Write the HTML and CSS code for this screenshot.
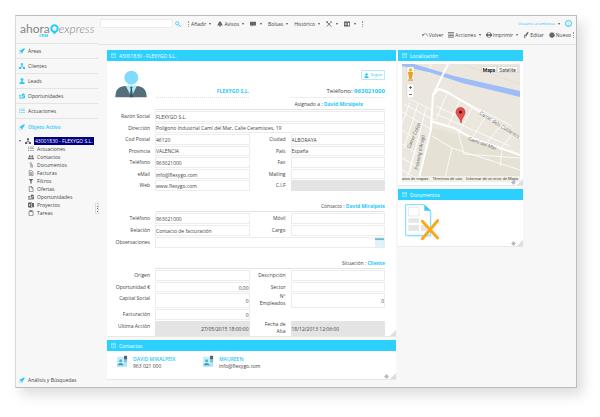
FILE: index.html
```html
<!DOCTYPE html>
<html lang="es">
<head>
<meta charset="utf-8">
<title>ahora express CRM</title>
<link rel="stylesheet" href="styles.css">
</head>
<body>
<svg width="0" height="0" class="defs" aria-hidden="true">
  <symbol id="i-rocket" viewBox="0 0 12 12"><path d="M11.5.5C8 1 6 2.500 4.500 4.500L2 4.700.3 7l2.500.2 2.200 2 .3 2.500 2-1.600.3-2.800C9.800 6 11 4 11.500.500zM.5 11.500l1-3 2 2z"/></symbol>
  <symbol id="i-org" viewBox="0 0 12 12"><path d="M4 .5h4v4H6.700v1.500L10 8h2v4H7.500V8H8L6 7 4 8h.5v4H0V8h2l3.300-2V4.500H4z"/></symbol>
  <symbol id="i-user" viewBox="0 0 12 12"><circle cx="6" cy="3.200" r="2.900"/><path d="M4.500 5.500h3V8L11 9.200V12H1V9.200L4.500 8z"/></symbol>
  <symbol id="i-users" viewBox="0 0 14 12"><circle cx="4" cy="4" r="2.300"/><circle cx="10" cy="4" r="2.300"/><path d="M0 11V8.500l3-1.300h2l1.500.8v3zM7.500 11V8L9 7.200h2l3 1.300V11z"/></symbol>
  <symbol id="i-money" viewBox="0 0 14 12"><path d="M0 4h5v2H0zm0 3h5v2H0zm0 3h8v2H0zM8 0h3v1.500h2.500v2H9v1.500h5V11h-3v1H9v-1H6.500V9h5V7H6.500V1.500H8z"/></symbol>
  <symbol id="i-list" viewBox="0 0 14 12"><path d="M0 1h2v1.500H0zm4 0h10v1.200H4zM0 5h2v1.500H0zm4 0h10v1.200H4zM0 9h2v1.500H0zm4 0h10v1.200H4z"/></symbol>
  <symbol id="i-clip" viewBox="0 0 12 12"><path d="M4 4V2.500a1.500 1.500 0 013 0V8a1 1 0 01-2 0V4M5 10.500a2.500 2.500 0 004 0V5" fill="none" stroke="currentColor"/></symbol>
  <symbol id="i-file" viewBox="0 0 12 12"><path d="M2.500.7H7L10 4v7.300H2.500zM7 .7V4h3" fill="none" stroke="currentColor" stroke-width="1.300"/></symbol>
  <symbol id="i-bill" viewBox="0 0 12 12"><path d="M2.500.7H7L10 4v7.300H2.500zM4.500 5h3v4h-3z" fill="none" stroke="currentColor" stroke-width="1.200"/></symbol>
  <symbol id="i-filter" viewBox="0 0 12 12"><path d="M1.500 2h9L7.300 6v5H4.700V6z"/></symbol>
  <symbol id="i-book" viewBox="0 0 12 12"><path d="M0 1.500L7 0v12l-7-1.500zM8 2h4v8.500H8zM2 4v4l3-2z" fill-rule="evenodd"/></symbol>
  <symbol id="i-task" viewBox="0 0 12 12"><path d="M2 2h8v9.300H2zM4 .8h4V3H4z" fill="none" stroke="currentColor" stroke-width="1.300"/></symbol>
  <symbol id="i-bell" viewBox="0 0 12 12"><path d="M6 0l1 1.500C9.500 2.500 9 6 11.500 9H.5C3 6 2.500 2.500 5 1.500zM4 9.500h4L6 12z"/></symbol>
  <symbol id="i-chat" viewBox="0 0 12 12"><path d="M0 1.500h12V9H6l-2.500 2.500V9H0z"/></symbol>
  <symbol id="i-tools" viewBox="0 0 12 12"><path d="M1.500 11L9 3.500M2 2l8.500 9" fill="none" stroke="currentColor" stroke-width="1.800"/><path d="M8 1l3 3 1-1.500L9.500 0zM0 2l2-2 2.500 2L2 4.500z"/></symbol>
  <symbol id="i-panel" viewBox="0 0 12 12"><path d="M0 1h12v10H0zm1.500 3v1.200h5V4zm0 2.500v1.200h5V6.500zM8 4v5h2.500V4z" fill-rule="evenodd"/></symbol>
  <symbol id="i-undo" viewBox="0 0 14 12"><path d="M0 4l5.500 1L1.500 9z"/><path d="M2 7C4 2 12 1 13 9" fill="none" stroke="currentColor" stroke-width="1.500"/></symbol>
  <symbol id="i-grid" viewBox="0 0 12 12"><path d="M0 0h12v2H0zm0 3h12v2H0zm0 3h12v2H0zm0 3h12v2.500H0z" opacity=".75"/></symbol>
  <symbol id="i-print" viewBox="0 0 14 12"><path d="M3 0h8v3h3v6h-3l-1 3H4L3 9H0V3h3zm1.500 1.200V4h5V1.200zM5 8v2.500h4V8z" fill-rule="evenodd"/></symbol>
  <symbol id="i-edit" viewBox="0 0 12 12"><path d="M9 0l2.500 1L7 8l-3 1 1-4zM2 6l2-1-1 5 3 .5-4 1.500z"/></symbol>
  <symbol id="i-new" viewBox="0 0 12 12"><path d="M6 0l1.200 1.600L9 .8l.5 2 2 .5-.8 1.800L12 6.500l-1.500 1.300.3 2-2 .2L8 12l-2-1-2 1-.8-2-2-.2.3-2L0 6.500l1.300-1.400L.5 3.300l2-.5.5-2 1.800.8z"/></symbol>
  <symbol id="i-search" viewBox="0 0 12 12"><circle cx="4.500" cy="4.500" r="3.300" fill="none" stroke="currentColor" stroke-width="1.500"/><path d="M7 7l4.500 4.500" stroke="currentColor" stroke-width="2"/></symbol>
  <symbol id="i-min" viewBox="0 0 12 12"><path d="M1 1h10v10H1zM1 3.500h10M3.500 7h5" fill="none" stroke="currentColor"/></symbol>
  <symbol id="i-gear" viewBox="0 0 12 12"><circle cx="6" cy="6" r="4"/><path d="M6 0v12M0 6h12M2 2l8 8M10 2l-8 8" stroke="currentColor" stroke-width="1.600"/></symbol>
  <symbol id="i-contact" viewBox="0 0 36 36"><path d="M0 4h22v32H0z" fill="#c5eefb"/><path d="M0 31h33v5H0z" fill="#8fdcf5"/><path d="M22 2h11v34H22z" fill="#aee6f7"/><path d="M23 1h10v12H23z" fill="#4d6672"/><path d="M23 14h10v8H23z" fill="#7cc3d9"/><circle cx="12" cy="17" r="5" fill="#53b4d4"/><path d="M3 31c0-8 18-8 18 0z" fill="#418fae"/></symbol>
</svg>

<div class="window">
  <aside class="sidebar">
    <div class="logo">
      <div class="name"><span class="ahora">ahora</span><svg class="ring" viewBox="0 0 18 22"><circle cx="9" cy="9" r="6.500" fill="none" stroke="#27cdf9" stroke-width="4"/><path d="M5 16h8l-4 5z" fill="#27cdf9"/></svg><span class="express">express</span></div>
      <small>CRM</small>
    </div>
    <nav class="areas">
      <a href="#"><svg><use href="#i-rocket"/></svg>Áreas</a>
      <a href="#"><svg><use href="#i-org"/></svg>Clientes</a>
      <a href="#"><svg><use href="#i-user"/></svg>Leads</a>
      <a href="#"><svg><use href="#i-money"/></svg>Oportunidades</a>
      <a href="#"><svg><use href="#i-list"/></svg>Actuaciones</a>
      <a href="#" class="active"><svg><use href="#i-rocket"/></svg>Objeto Activo</a>
    </nav>
    <div class="tree">
      <a href="#" class="root"><i class="caret"></i><svg><use href="#i-org"/></svg><span>43001830 - FLEXYGO S.L.</span></a>
      <a href="#"><svg><use href="#i-list"/></svg>Actuaciones</a>
      <a href="#"><svg><use href="#i-users"/></svg>Contactos</a>
      <a href="#"><svg><use href="#i-clip"/></svg>Documentos</a>
      <a href="#"><svg><use href="#i-bill"/></svg>Facturas</a>
      <a href="#"><svg><use href="#i-filter"/></svg>Filtros</a>
      <a href="#"><svg><use href="#i-file"/></svg>Ofertas</a>
      <a href="#"><svg><use href="#i-money"/></svg>Oportunidades</a>
      <a href="#"><svg><use href="#i-book"/></svg>Proyectos</a>
      <a href="#"><svg><use href="#i-task"/></svg>Tareas</a>
    </div>
    <button class="splitter" aria-label="Contraer menú"><i></i><i></i><i></i></button>
    <a href="#" class="bottom"><svg><use href="#i-rocket"/></svg>Análisis y Búsquedas</a>
  </aside>

  <div class="content">
    <header class="top">
      <div class="bar">
        <input class="search" type="search" aria-label="Buscar">
        <button class="go" aria-label="Buscar"><svg><use href="#i-search"/></svg></button>
        <div class="menu">
          <span class="dots"></span>
          <button>Añadir<i class="caret"></i></button>
          <button><svg><use href="#i-bell"/></svg>Avisos<i class="caret"></i></button>
          <button aria-label="Mensajes"><svg><use href="#i-chat"/></svg><i class="caret"></i></button>
          <button>Bolsas<i class="caret"></i></button>
          <button>Histórico<i class="caret"></i></button>
          <button aria-label="Herramientas"><svg><use href="#i-tools"/></svg><i class="caret"></i></button>
          <button aria-label="Paneles"><svg><use href="#i-panel"/></svg><i class="caret"></i></button>
          <span class="dots"></span>
        </div>
        <button class="account">Usuario: aramistraa<i class="caret"></i></button>
        <button class="info" aria-label="Información">i</button>
      </div>
      <div class="actions">
        <button><svg><use href="#i-undo"/></svg>Volver</button>
        <button><svg><use href="#i-grid"/></svg>Acciones<i class="caret"></i></button>
        <button><svg><use href="#i-print"/></svg>Imprimir<i class="caret"></i></button>
        <button><svg><use href="#i-edit"/></svg>Editar</button>
        <button><svg><use href="#i-new"/></svg>Nuevo</button>
        <span class="dots"></span>
      </div>
    </header>

    <main class="board">
      <div class="col">
        <section class="panel">
          <h2><svg><use href="#i-min"/></svg>43001830 - FLEXYGO S.L.</h2>
          <div class="record">
            <div class="hero">
              <svg class="bust" viewBox="0 0 96 84"><circle cx="49" cy="23" r="21" fill="#7fdcfa"/><path d="M1 82c1-26 10-32 32-34l16 26 16-26c20 2 30 10 30 34z" fill="#546e7a"/><path d="M33 48l7-2h18l7 2-16 34z" fill="#b3e9fb"/><path d="M45 50h8l-2 6 3 26h-10l3-26z" fill="#37596b"/></svg>
              <strong class="company">FLEXYGO S.L.</strong>
              <div class="phone"><button class="follow"><svg><use href="#i-user"/></svg>Seguir</button><p>Teléfono: <b>963021000</b></p></div>
            </div>
            <p class="legend near">Asignado a : <b>David Miralpeix</b></p>
            <div class="fields seven">
              <label for="f1">Razón Social</label><input id="f1" class="wide" value="FLEXYGO S.L.">
              <label for="f2">Dirección</label><input id="f2" class="wide" value="Polígono Industrial Camí del Mar, Calle Ceramistes, 19">
              <label for="f3">Cod Postal</label><input id="f3" value="46120"><label for="f4">Ciudad</label><input id="f4" value="ALBORAYA">
              <label for="f5">Provincia</label><input id="f5" value="VALENCIA"><label for="f6">País</label><input id="f6" value="España">
              <label for="f7">Teléfono</label><input id="f7" value="963021000"><label for="f8">Fax</label><input id="f8">
              <label for="f9">eMail</label><input id="f9" value="info@flexygo.com"><label for="f10">Mailing</label><input id="f10">
              <label for="f11">Web</label><input id="f11" value="www.flexygo.com"><label for="f12">C.I.F</label><input id="f12" class="off" readonly>
            </div>
            <p class="legend">Contacto : <b>David Miralpeix</b></p>
            <div class="fields three">
              <label for="g1">Teléfono</label><input id="g1" value="963021000"><label for="g2">Móvil</label><input id="g2">
              <label for="g3">Relación</label><input id="g3" value="Contacto de facturación"><label for="g4">Cargo</label><input id="g4">
              <label for="g5">Observaciones</label><div class="wide memo"><input id="g5"><svg viewBox="0 0 28 26"><path d="M0 0h28v26H0z" fill="#d5f0f8"/><path d="M0 0h28v5H0z" fill="#67b5cd"/><path d="M7 5v21M14 5v21M21 5v21M0 12h28M0 19h28" stroke="#fff"/></svg></div>
            </div>
            <p class="legend">Situación : <b>Cliente</b></p>
            <div class="fields five">
              <label for="h1">Origen</label><input id="h1"><label for="h2">Descripción</label><input id="h2">
              <label for="h3">Oportunidad €</label><input id="h3" class="num" value="0,00"><label for="h4">Sector</label><input id="h4">
              <label for="h5">Capital Social</label><input id="h5" class="num" value="0"><label for="h6">Nº Empleados</label><input id="h6" class="num" value="0">
              <label for="h7">Facturación</label><input id="h7" class="num" value="0"><span></span><span></span>
              <label for="h8">Ultima Acción</label><input id="h8" class="num off" value="27/05/2015 18:00:00" readonly><label for="h9">Fecha de Alta</label><input id="h9" class="off" value="18/12/2013 12:06:00" readonly>
            </div>
          </div>
          <i class="grip"></i>
        </section>
        <section class="panel">
          <h2><svg><use href="#i-min"/></svg>Contactos</h2>
          <div class="contacts">
            <article><svg><use href="#i-contact"/></svg><div><b>DAVID MIRALPEIX</b><p>963 021 000</p></div></article>
            <article><svg><use href="#i-contact"/></svg><div><b>MAUREEN</b><p>info@flexygo.com</p></div></article>
          </div>
          <svg class="gear"><use href="#i-gear"/></svg><i class="grip"></i>
        </section>
      </div>

      <div class="col">
        <section class="panel">
          <h2><svg><use href="#i-min"/></svg>Localización</h2>
          <div class="map">
            <svg viewBox="0 0 118 118" role="img" aria-label="Mapa">
              <path d="M0 0h118v118H0z" fill="#ebe7de"/>
              <path d="M30 64l40 10 48 18v26H16z" fill="#e5e1d5"/>
              <g fill="none" stroke="#fff" stroke-width=".8">
                <path d="M29 0L27 10M0 66L27 84M0 48l30 18M0 80l22 14M0 94l18 10M0 106l14 8M8 38L-4 70M16 40L2 84M24 44L8 108M2 40l30 16M6 34l24 12M4 118L18 68"/>
                <path d="M34 42l26 12M34 50l74 32M46 27L34 56M58 36L46 62M70 44L57 69M84 52L70 74M98 62L84 80M110 70l-12 16M40 26l70 36M30 72l20 12 68 22M50 84l-8 34M56 68l6 22 56 4M100 86l-2 16"/>
                <path d="M60 0l58 20M90 0l28 8" stroke="#ddd8cd" stroke-width=".5"/>
              </g>
              <path d="M0 0h12l40 12 66 15v6L60 19 30 9 0 2z" fill="#9dbcf8"/>
              <g fill="none" stroke="#fff" stroke-width="2"><path d="M46 0L31 31l-2 34-13 53"/><path d="M32 30l5-5 8 3 30 18 43 28M28 57l24 7 18 10 48 17"/></g>
              <g class="streets">
                <text transform="translate(77 50) rotate(32)">Carrer dels Calderers</text>
                <text transform="translate(66 76) rotate(20)">Camí del Mar</text>
                <text transform="translate(16 106) rotate(-79)">Passeig d'Aragó</text>
                <text transform="translate(8 85) rotate(-67)">Carrer Colón</text>
              </g>
              <path d="M59 59c-1-6-5-7-5-11a4.500 4.500 0 019 0c0 4-3 5-4 11z" fill="#ea4e4a" stroke="#b52c2a" stroke-width=".6"/><circle cx="58.500" cy="48" r="1.600" fill="#4c0e0d"/>
              <rect x="5" y="3" width="7" height="13" rx="1" fill="#fff" stroke="#ccc" stroke-width=".5"/><circle cx="8.500" cy="6" r="1.800" fill="#f3b32b"/><path d="M6 8h5l-.5 4-.7 3H7.200L6.500 12z" fill="#eaa31c"/>
              <path d="M6 16h5" stroke="#c98d22"/>
              <rect x="5" y="20" width="7" height="14" rx="1" fill="#fff" stroke="#ccc" stroke-width=".5"/><path d="M7 23.500h3M8.500 22v3M7 30.500h3" stroke="#555" stroke-width=".8"/><path d="M6 27h5" stroke="#ddd" stroke-width=".5"/>
            </svg>
            <div class="types"><button class="on">Mapa</button><button>Satélite</button></div>
            <p class="credits"><a href="#">atos de mapas</a><a href="#">Términos de uso</a><a href="#">Informar de un error de Maps</a></p>
          </div>
          <svg class="gear"><use href="#i-gear"/></svg><i class="grip"></i>
        </section>
        <section class="panel">
          <h2><svg><use href="#i-min"/></svg>Documentos</h2>
          <div class="docs">
            <svg viewBox="0 0 102 108"><path d="M8 2h48l24 22v76H8z" fill="#d4f3fd"/><path d="M2 2h56l18 18v74H2z" fill="#fff" stroke="#7adcf9" stroke-width="3"/><path d="M58 2v18h20z" fill="#3fc8f2"/><path d="M10 10h32v26H10z" fill="#fff" stroke="#ddd" stroke-width="2"/><path d="M10 43h32v13H10zM10 63h32v18H10zM48 63h18v18H48z" fill="#e6e6e6"/><path d="M52 52l46 50M98 50l-46 54" stroke="#f9a91b" stroke-width="9" stroke-linecap="round"/></svg>
          </div>
          <svg class="gear"><use href="#i-gear"/></svg><i class="grip"></i>
        </section>
      </div>
    </main>
  </div>
</div>
</body>
</html>
```
FILE: styles.css
```css
* { box-sizing: border-box; }
body {
  margin: 0;
  min-height: 100vh;
  display: flex;
  padding: 15px 23px 29px 15px;
  background: #fff;
  color: #444;
  font: 5px/8px "Open Sans", "Noto Sans", sans-serif;
}
.defs { position: absolute; }
p, h2 { margin: 0; }
a { color: inherit; text-decoration: none; }
b, .active, .company { color: #27c8f6; }
svg { fill: currentColor; flex: none; }
button { border: 0; padding: 0; background: none; color: inherit; font: inherit; display: flex; align-items: center; }
input { font: inherit; color: inherit; min-width: 0; width: 100%; border: 1px solid #ececec; border-radius: 0; background: #fff; outline: 0; }

.window {
  flex: 1;
  display: flex;
  background: #f7f7f7;
  border: 1px solid #bcbcbc;
  border-left-color: #dadada;
  box-shadow: 6px 7px 12px #0002;
}

/* Sidebar */
.sidebar { width: 82px; flex: none; display: flex; flex-direction: column; position: relative; }
.logo { height: 28px; padding: 8px 0 0 4px; border-bottom: 1px solid #e4e4e4; }
.name { display: flex; align-items: center; height: 10px; color: #858585; font: 12px/10px Lato, sans-serif; }
.express { font-weight: 300; font-style: italic; }
.ring { width: 9px; height: 11px; }
.logo small { display: block; padding-left: 19px; color: #27cdf9; font: bold 4px/4px "Open Sans", sans-serif; }
.areas a, .bottom { height: 15px; display: flex; align-items: center; gap: 3px; padding-left: 3px; border-bottom: 1px solid #e4e4e4; }
.areas svg, .bottom svg { width: 6px; height: 6px; color: #27c8f6; }
.areas .active { border: 0; font-weight: 600; }
.tree { padding-top: 3px; }
.tree a { height: 8px; display: flex; align-items: center; gap: 3px; padding-left: 12px; }
.tree svg { width: 6px; height: 6px; color: #666; }
.tree .root { padding-left: 3px; }
.root .caret { margin: 0 1px 0 0; }
.root span { background: #000080; color: #fff; line-height: 8px; padding: 0 1px; white-space: nowrap; }
.bottom { margin-top: auto; border: 0; }
.splitter { position: absolute; right: -1px; top: 187px; width: 4px; height: 11px; flex-direction: column; justify-content: space-evenly; border: 1px solid #ddd; }
.splitter i { width: 1px; height: 1px; background: #777; }
.caret { width: 0; height: 0; border: 1px solid transparent; border-top: 2px solid #555; border-bottom: 0; margin-left: 3px; }

/* Header */
.content { flex: 1; min-width: 0; display: flex; flex-direction: column; }
.top { height: 29px; padding: 3px 2px 0 2px; border-bottom: 1px solid #e4e4e4; }
.bar { display: flex; align-items: center; height: 9px; }
.search { width: 73px; height: 9px; }
.go { margin-left: 2px; color: #27c8f6; }
.top svg { width: 6px; height: 6px; }
.menu { display: flex; align-items: center; gap: 6px; margin-left: 7px; }
.menu svg { margin-right: 1px; }
.top .menu svg, .actions svg { color: #666; }
.dots { height: 6px; border-left: 1px dotted #999; }
.menu .dots:first-child { margin-right: -4px; }
.account { margin-left: auto; color: #27c8f6; font-size: 4px; }
.info { width: 7px; height: 7px; margin: 0 2px 0 5px; border: 1px solid #27c8f6; border-radius: 50%; color: #27c8f6; justify-content: center; }
.actions { display: flex; justify-content: flex-end; align-items: center; gap: 5px; height: 14px; }
.actions svg { margin-right: 1px; }
.actions .dots { margin-left: -3px; }

/* Panels */
.board { display: grid; grid-template-columns: minmax(0, 289fr) minmax(0, 125fr) 51fr; gap: 2px; padding: 5px 0 0 9px; align-items: start; }
.col { display: grid; gap: 3px; }
.panel { position: relative; background: #fff; border-bottom: 1px solid #e8e8e8; }
.panel h2 { display: flex; align-items: center; gap: 3px; height: 11px; padding-left: 4px; background: #2bd0ff; color: #fff; font-size: 5px; font-weight: 400; }
.panel h2 svg { width: 5px; height: 5px; }
.grip { position: absolute; right: 0; bottom: 0; border: 3px solid transparent; border-right-color: #ddd; border-bottom-color: #ddd; }
.gear { position: absolute; right: 7px; bottom: 0; width: 5px; height: 5px; color: #bbb; }

/* Record form */
.record { padding: 9px 11px 0 8px; }
.hero { display: grid; grid-template-columns: 41px 1fr 94px; height: 28px; }
.bust { width: 32px; height: 28px; }
.company { align-self: end; height: 11px; margin-right: 42px; border-bottom: 1px dotted #ddd; text-align: right; }
.phone { display: flex; flex-direction: column; justify-content: space-between; align-items: flex-end; }
.phone p { height: 11px; width: 100%; text-align: right; border-bottom: 1px solid #eee; font-size: 6px; }
.follow { width: 24px; height: 10px; justify-content: center; gap: 2px; border: 1px solid #b6ebfb; border-radius: 1px; color: #27c8f6; font-size: 4px; }
.follow svg { width: 5px; height: 5px; }
.legend { margin: 11px 0 1px 40px; height: 10px; text-align: right; border-bottom: 1px solid #e4e4e4; }
.legend.near { margin-top: 2px; padding-right: 22px; }
.fields { display: grid; grid-template-columns: 35px 1fr 31px 1fr; column-gap: 5px; row-gap: 1px; }
.fields label { text-align: right; line-height: 7px; padding-top: 2px; white-space: nowrap; }
.fields label[for="h6"], .fields label[for="h9"] { white-space: normal; padding-top: 0; }
.fields input { height: 100%; padding: 1px 0 0; }
.fields .wide { grid-column: 2 / -1; }
.fields .num { text-align: right; }
.fields .off { background: #e4e4e4; border-color: #e4e4e4; }
.seven { height: 80px; grid-auto-rows: 1fr; }
.three { height: 35px; grid-auto-rows: 1fr; }
.five { grid-template-rows: 11px 10px 15px 11px 15px; }
.memo { position: relative; }
.memo svg { position: absolute; right: 1px; top: 1px; width: 9px; height: 9px; }

.contacts { display: grid; grid-template-columns: 86px 1fr; height: 28px; padding: 4px 10px; }
.contacts article { display: flex; gap: 5px; }
.contacts svg { width: 11px; height: 12px; }
.contacts b { font-weight: 600; display: block; }
.contacts p { line-height: 6px; }

/* Map and documents */
.map { position: relative; margin: 3px 3px 3px 4px; }
.map > svg { display: block; width: 100%; height: auto; }
.streets { font: 5px Roboto, sans-serif; fill: #777; }
.types { position: absolute; top: 2px; right: 2px; display: flex; font-family: Roboto, sans-serif; }
.types button { height: 7px; padding: 0 1px; background: #fff; border: 1px solid #ddd; }
.types .on { font-weight: 700; color: #222; }
.credits { position: absolute; left: 0; right: 0; bottom: 0; height: 6px; line-height: 6px; display: flex; justify-content: space-between; white-space: nowrap; background: #f5f3eecc; font-family: Roboto, sans-serif; font-size: 4px; padding-right: 2px; }
.docs { height: 46px; padding: 4px 7px; }
.docs svg { width: 34px; height: 36px; display: block; }
```
